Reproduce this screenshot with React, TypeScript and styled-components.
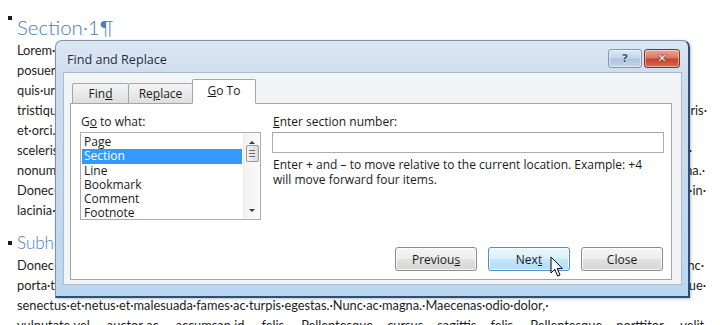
import React from "react";
import styled, { createGlobalStyle } from "styled-components";

const GlobalStyle = createGlobalStyle`
  html, body { margin: 0; padding: 0; background: #ffffff; }
  body { width: 720px; height: 325px; overflow: hidden; }
  * { box-sizing: border-box; }
`;

const Page = styled.div`
  position: relative;
  width: 720px;
  height: 325px;
  overflow: hidden;
  background: #ffffff;
`;

/* ---------- document ---------- */

const Doc = styled.div`
  width: 707px;
  padding: 14px 0 0 17px;
  font-family: Lato, "Open Sans", sans-serif;
  font-size: 12.8px;
  color: #1e1e1e;
`;

const Heading = styled.div<{ $size: number; $lh: number; $mt: number; $bullet: number }>`
  position: relative;
  font-size: ${(p) => p.$size}px;
  line-height: ${(p) => p.$lh}px;
  margin-top: ${(p) => p.$mt}px;
  font-weight: 300;
  color: #4a7dbb;
  white-space: nowrap;
  &::before {
    content: "";
    position: absolute;
    left: -9px;
    top: ${(p) => p.$bullet}px;
    width: 4px;
    height: 4px;
    background: #1d1d1d;
  }
`;

const Line = styled.div`
  display: flex;
  justify-content: space-between;
  height: 20px;
  line-height: 20px;
  white-space: nowrap;
`;

const Tail = styled.span<{ $pad?: number }>`
  padding-right: ${(p) => p.$pad ?? 0}px;
`;

const JustifiedLine = styled.div`
  height: 20px;
  line-height: 20px;
  white-space: nowrap;
  display: flex;
  justify-content: space-between;
`;

/* ---------- dialog window ---------- */

const Window = styled.div`
  position: absolute;
  left: 55px;
  top: 40px;
  width: 635px;
  height: 258px;
  display: flex;
  flex-direction: column;
  padding: 0 6px 11px 7px;
  border: 1px solid #7d93ad;
  border-right: 2px solid #2c4f78;
  border-bottom: 2px solid #2c4f78;
  border-radius: 7px 7px 0 0;
  background: linear-gradient(180deg, #dce7f3 0%, #cfdded 12%, #c6d9ee 60%, #bcd7f1 100%);
  box-shadow: 1px 1px 3px rgba(0, 0, 0, 0.25);
  font-family: "Open Sans", "Noto Sans", sans-serif;
  font-size: 12px;
  color: #1b1b1b;
`;

const TitleBar = styled.div`
  height: 31px;
  display: flex;
  align-items: flex-start;
  padding-left: 4px;
`;

const Title = styled.div`
  flex: 1;
  margin-top: 11px;
  line-height: 16px;
  font-size: 12.6px;
  color: #1c2a45;
  text-shadow: 0 0 6px rgba(255, 255, 255, 0.9);
`;

const CaptionButton = styled.div<{ $kind: "help" | "close" }>`
  margin-top: 8px;
  width: ${(p) => (p.$kind === "help" ? 34 : 36)}px;
  height: 19px;
  margin-left: 2px;
  margin-right: ${(p) => (p.$kind === "close" ? 2 : 0)}px;
  border-radius: 3px;
  display: flex;
  align-items: center;
  justify-content: center;
  font-family: "DejaVu Sans", sans-serif;
  font-weight: bold;
  font-size: 11px;
  line-height: 1;
  border: 1px solid ${(p) => (p.$kind === "help" ? "#7d97b6" : "#83342a")};
  background: ${(p) =>
    p.$kind === "help"
      ? "linear-gradient(180deg, #dde8f4 0%, #c3d5ea 48%, #adc4df 52%, #c2d6ec 100%)"
      : "linear-gradient(180deg, #eaa898 0%, #db7762 45%, #c9432c 55%, #d66c50 100%)"};
  color: ${(p) => (p.$kind === "help" ? "#3d5270" : "#ffffff")};
  text-shadow: ${(p) =>
    p.$kind === "help" ? "0 0 2px #ffffff" : "0 0 2px #6b1a10, 0 0 1px #6b1a10"};
  box-shadow: inset 0 0 0 1px rgba(255, 255, 255, 0.45);
`;

const Client = styled.div`
  flex: 1;
  display: flex;
  flex-direction: column;
  padding: 6px 9px 4px 6px;
  background: #f3f4f6;
  border: 1px solid #a9bbd0;
`;

const TabRow = styled.div`
  position: relative;
  z-index: 1;
  display: flex;
  align-items: flex-end;
  height: 25px;
  margin-bottom: -1px;
  padding-left: 2px;
`;

const Tab = styled.div<{ $w: number; $active?: boolean }>`
  width: ${(p) => p.$w}px;
  height: ${(p) => (p.$active ? 25 : 21)}px;
  margin-left: -1px;
  display: flex;
  align-items: center;
  justify-content: center;
  padding-bottom: ${(p) => (p.$active ? 3 : 0)}px;
  font-size: 12px;
  color: #1b1b1b;
  border: 1px solid #a3a5aa;
  border-bottom: ${(p) => (p.$active ? "1px solid #ffffff" : "1px solid #a3a5aa")};
  border-radius: 2px 2px 0 0;
  background: ${(p) =>
    p.$active ? "#ffffff" : "linear-gradient(180deg, #f4f4f4 0%, #ebebeb 50%, #dedede 100%)"};
  &:first-child { margin-left: 0; }
`;

const Panel = styled.div`
  flex: 1;
  display: flex;
  flex-direction: column;
  justify-content: space-between;
  padding: 10px 7px 8px 9px;
  background: #ffffff;
  border: 1px solid #a3a5aa;
`;

const Fields = styled.div`
  display: grid;
  grid-template-columns: 181px 1fr;
  column-gap: 11px;
`;

const Column = styled.div`
  display: flex;
  flex-direction: column;
`;

const Label = styled.div`
  line-height: 16px;
  margin-bottom: 2px;
  padding-left: 1px;
`;

const U = styled.span`
  text-decoration: underline;
  text-underline-offset: 1px;
`;

const ListBox = styled.div`
  height: 88px;
  display: flex;
  border: 1px solid #abadb3;
  background: #ffffff;
`;

const Items = styled.div`
  flex: 1;
  padding: 2px 1px 0 1px;
`;

const Item = styled.div<{ $selected?: boolean }>`
  height: 14.3px;
  line-height: 14.3px;
  padding-left: 2px;
  background: ${(p) => (p.$selected ? "#3399ff" : "transparent")};
  color: ${(p) => (p.$selected ? "#ffffff" : "#1b1b1b")};
`;

const ScrollBar = styled.div`
  width: 17px;
  display: flex;
  flex-direction: column;
  align-items: center;
  justify-content: space-between;
  padding: 8px 0 7px 0;
  background: linear-gradient(90deg, #f2f2f2, #fafafa);
  border-left: 1px solid #ececec;
`;

const Arrow = styled.div<{ $up?: boolean }>`
  width: 0;
  height: 0;
  border-left: 3px solid transparent;
  border-right: 3px solid transparent;
  ${(p) => (p.$up ? "border-bottom: 3px solid #3a3a3a;" : "border-top: 3px solid #3a3a3a;")}
`;

const Thumb = styled.div`
  width: 13px;
  height: 17px;
  margin-top: -46px;
  border: 1px solid #9a9a9a;
  border-radius: 2px;
  background: linear-gradient(90deg, #f4f4f4, #dcdcdc);
  display: flex;
  flex-direction: column;
  align-items: center;
  justify-content: center;
  gap: 2px;
`;

const Grip = styled.div`
  width: 6px;
  height: 1px;
  background: #6b6b6b;
`;

const TextBox = styled.div`
  height: 21px;
  border: 1px solid #abadb3;
  border-top-color: #a0a3aa;
  background: #ffffff;
`;

const Hint = styled.div`
  margin-top: 4px;
  line-height: 15px;
  padding-left: 1px;
`;

const ButtonRow = styled.div`
  display: flex;
  justify-content: flex-end;
  gap: 11px;
  padding-right: 1px;
`;

const Button = styled.div<{ $hot?: boolean }>`
  width: 82px;
  height: 24px;
  display: flex;
  align-items: center;
  justify-content: center;
  font-size: 12px;
  color: #1b1b1b;
  border-radius: 3px;
  border: 1px solid ${(p) => (p.$hot ? "#4f8fc4" : "#8a8a8a")};
  box-shadow: inset 0 0 0 1px rgba(255, 255, 255, 0.8);
  background: ${(p) =>
    p.$hot
      ? "linear-gradient(180deg, #eaf6fd 0%, #d9f0fc 50%, #c4e6fb 51%, #b2dcf5 100%)"
      : "linear-gradient(180deg, #f5f5f5 0%, #eeeeee 50%, #e2e2e2 51%, #d6d6d6 100%)"};
`;

const Cursor = styled.svg`
  position: absolute;
  left: 550px;
  top: 256px;
`;

const leftLines: [string, string, number?][] = [
  ["Lorem·ipsum·dolor·sit·amet,·consectetuer", ""],
  ["posuere,·magna·sed·pulvinar·ultricies,", ""],
  ["quis·urna.·Nunc·viverra·imperdiet", ""],
  ["tristique·senectus·et·netus·et", "Mauris·", 0],
  ["et·orci.·Aenean·nec·lorem.", ""],
  ["scelerisque·at,·vulputate·vitae,", "·", 15],
  ["nonummy.·Fusce·aliquet·pede", "magna.·", 2],
  ["Donec·hendrerit,·felis·et", "metus,·in·", 1],
  ["lacinia·nulla·nisl·eget·sapien.¶", ""],
];

const lowerLines: [string, string, number?][] = [
  ["Donec·ut·est·in·lectus·consequat", "in·nunc·", 3],
  ["porta·tristique.·Proin·nec", "augue·", 1],
  ["senectus·et·netus·et·malesuada·fames·ac·turpis·egestas.·Nunc·ac·magna.·Maecenas·odio·dolor,·", ""],
];

const listItems = ["Page", "Section", "Line", "Bookmark", "Comment", "Footnote"];

export default function App() {
  return (
    <Page>
      <GlobalStyle />
      <Doc>
        <Heading $size={20.5} $lh={26} $mt={0} $bullet={2}>
          Section·1¶
        </Heading>
        {leftLines.map(([a, b, pad], i) => (
          <Line key={i}>
            <span>{a}</span>
            <Tail $pad={pad}>{b}</Tail>
          </Line>
        ))}
        <Heading $size={17} $lh={24} $mt={11} $bullet={10}>
          Subheading¶
        </Heading>
        {lowerLines.map(([a, b, pad], i) => (
          <Line key={i}>
            <span>{a}</span>
            <Tail $pad={pad}>{b}</Tail>
          </Line>
        ))}
        <JustifiedLine>
          {"vulputate·vel, auctor·ac, accumsan·id, felis. Pellentesque cursus sagittis felis. Pellentesque porttitor, velit,"
            .split(" ")
            .map((w, i) => (
              <span key={i}>{w}</span>
            ))}
        </JustifiedLine>
      </Doc>

      <Window>
        <TitleBar>
          <Title>Find and Replace</Title>
          <CaptionButton $kind="help">?</CaptionButton>
          <CaptionButton $kind="close">✕</CaptionButton>
        </TitleBar>
        <Client>
          <TabRow>
            <Tab $w={57}>
              Fin<U>d</U>
            </Tab>
            <Tab $w={65}>
              Re<U>p</U>lace
            </Tab>
            <Tab $w={64} $active>
              <U>G</U>o To
            </Tab>
          </TabRow>
          <Panel>
            <Fields>
              <Column>
                <Label>
                  G<U>o</U> to what:
                </Label>
                <ListBox>
                  <Items>
                    {listItems.map((it) => (
                      <Item key={it} $selected={it === "Section"}>
                        {it}
                      </Item>
                    ))}
                  </Items>
                  <ScrollBar>
                    <Arrow $up />
                    <Thumb>
                      <Grip />
                      <Grip />
                      <Grip />
                    </Thumb>
                    <Arrow />
                  </ScrollBar>
                </ListBox>
              </Column>
              <Column>
                <Label>
                  <U>E</U>nter section number:
                </Label>
                <TextBox />
                <Hint>
                  Enter + and – to move relative to the current location. Example: +4
                  <br />
                  will move forward four items.
                </Hint>
              </Column>
            </Fields>
            <ButtonRow>
              <Button>
                Previou<U>s</U>
              </Button>
              <Button $hot>
                Nex<U>t</U>
              </Button>
              <Button>Close</Button>
            </ButtonRow>
          </Panel>
        </Client>
      </Window>

      <Cursor width="14" height="22" viewBox="0 0 14 22">
        <path
          d="M1 1 L1 17 L4.8 13.4 L7.6 20 L10 19 L7.3 12.6 L12.4 12.6 Z"
          fill="#ffffff"
          stroke="#000000"
          strokeWidth="1"
          strokeLinejoin="round"
        />
      </Cursor>
    </Page>
  );
}
